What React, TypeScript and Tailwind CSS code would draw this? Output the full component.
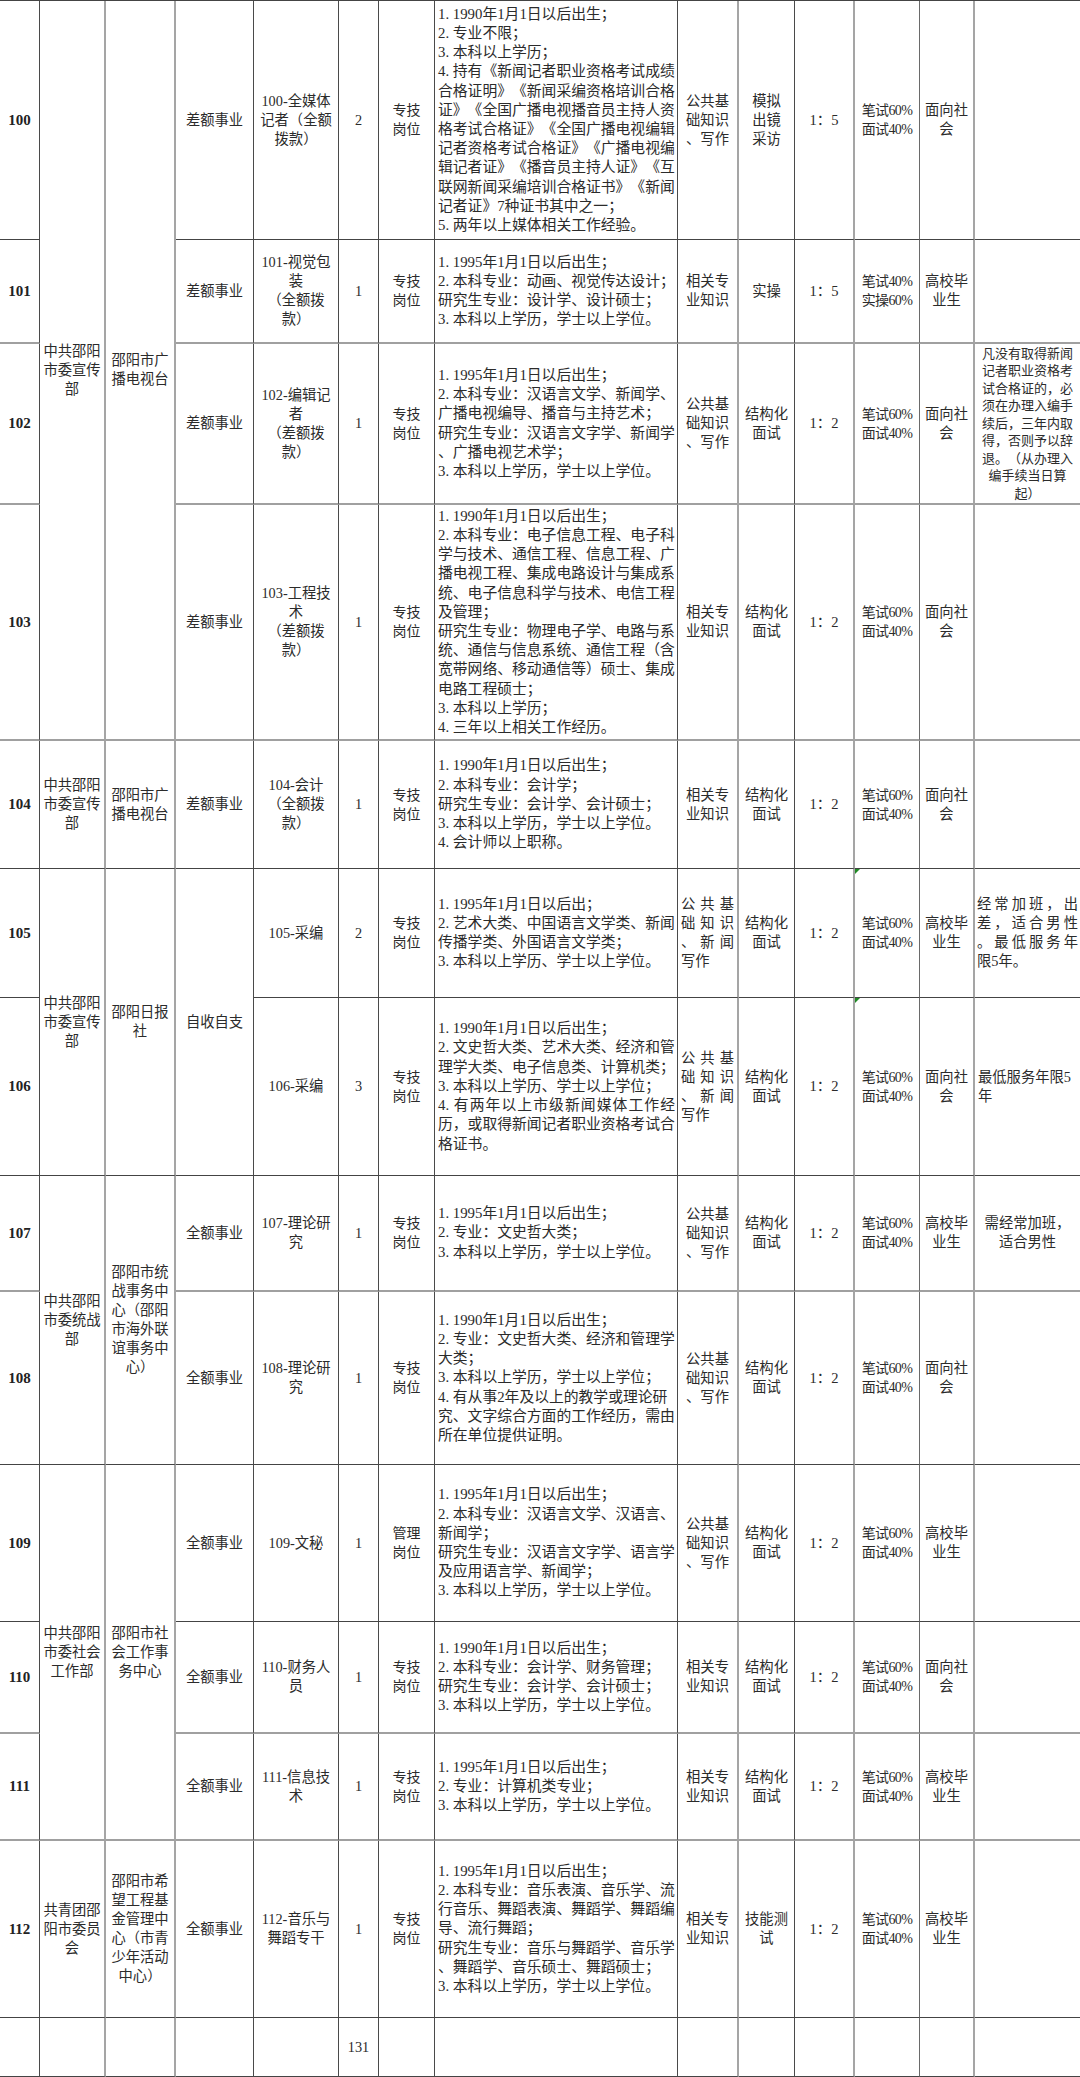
import React from "react";

type Line = string;

const BB = [
  "border-b border-b-[#444]",
  "border-b-2 border-b-[#a0a0a0]",
  "border-b-2 border-b-[#a0a0a0]",
  "border-b-2 border-b-[#a0a0a0]",
  "border-b border-b-[#444]",
  "border-b border-b-[#444]",
  "border-b border-b-[#444]",
  "border-b-2 border-b-[#a0a0a0]",
  "border-b border-b-[#444]",
  "border-b border-b-[#444]",
  "border-b-2 border-b-[#a0a0a0]",
  "border-b-2 border-b-[#a0a0a0]",
  "border-b border-b-[#444]",
  "border-b border-b-[#444]",
];

const BR = [
  "border-r border-r-[#4a4a4a]",
  "border-r-2 border-r-[#a5a5a5]",
  "border-r-2 border-r-[#a5a5a5]",
  "border-r border-r-[#4a4a4a]",
  "border-r border-r-[#4a4a4a]",
  "border-r border-r-[#4a4a4a]",
  "border-r border-r-[#4a4a4a]",
  "border-r border-r-[#4a4a4a]",
  "border-r-2 border-r-[#a5a5a5]",
  "border-r border-r-[#4a4a4a]",
  "border-r-2 border-r-[#a5a5a5]",
  "border-r border-r-[#6a6a6a]",
  "border-r-2 border-r-[#a5a5a5]",
  "",
];

const SPAN: Record<number, string> = {
  1: "",
  2: "row-span-2",
  3: "row-span-3",
  4: "row-span-4",
};

function Cell({
  col,
  end,
  span = 1,
  left = false,
  className = "",
  children,
}: {
  col: number;
  end: number;
  span?: number;
  left?: boolean;
  className?: string;
  children?: React.ReactNode;
}) {
  return (
    <div
      className={`${BR[col]} ${BB[end]} ${SPAN[span]} relative flex flex-col justify-center ${
        left ? "items-stretch text-left" : "items-center text-center"
      } ${className}`}
    >
      {children}
    </div>
  );
}

function Lines({ lines, className = "" }: { lines: Line[]; className?: string }) {
  return (
    <>
      {lines.map((l, i) => (
        <div key={i} className={`whitespace-nowrap ${className}`}>
          {l}
        </div>
      ))}
    </>
  );
}

function JLines({ lines, last }: { lines: Line[]; last?: Line }) {
  return (
    <>
      {lines.map((l, i) => (
        <div key={i} className="text-justify [text-align-last:justify]">
          {l}
        </div>
      ))}
      {last ? <div className="whitespace-nowrap text-left">{last}</div> : null}
    </>
  );
}

function Numbered({ text }: { text: string }) {
  const m = /^(\d)\.(.*)$/.exec(text);
  if (!m) return <>{text}</>;
  return (
    <>
      {m[1]}
      <span className="inline-block w-[0.5em]">.</span>
      {m[2]}
    </>
  );
}

type Group = { lines: Line[]; span: number };

type Row = {
  no: string;
  dept?: Group;
  unit?: Group;
  fund?: Group;
  post: Line[];
  num: string;
  kind: Line[];
  cond: Line[];
  condJ?: number;
  exam: Line[];
  examJ?: boolean;
  iv: Line[];
  ratio: string;
  score: Line[];
  green?: boolean;
  target: Line[];
  note?: "n102" | "n105" | "n106" | "n107";
};

const PUB = ["公共基", "础知识", "、写作"];
const REL = ["相关专", "业知识"];
const JG = ["结构化", "面试"];
const S64 = ["笔试60%", "面试40%"];
const SOC = ["面向社", "会"];
const GRAD = ["高校毕", "业生"];
const ZJ = ["专技", "岗位"];

const rows: Row[] = [
  {
    no: "100",
    dept: { lines: ["中共邵阳", "市委宣传", "部"], span: 4 },
    unit: { lines: ["邵阳市广", "播电视台"], span: 4 },
    fund: { lines: ["差额事业"], span: 1 },
    post: ["100-全媒体", "记者（全额", "拨款）"],
    num: "2",
    kind: ZJ,
    cond: [
      "1.1990年1月1日以后出生；",
      "2.专业不限；",
      "3.本科以上学历；",
      "4.持有《新闻记者职业资格考试成绩",
      "合格证明》《新闻采编资格培训合格",
      "证》《全国广播电视播音员主持人资",
      "格考试合格证》《全国广播电视编辑",
      "记者资格考试合格证》《广播电视编",
      "辑记者证》《播音员主持人证》《互",
      "联网新闻采编培训合格证书》《新闻",
      "记者证》7种证书其中之一；",
      "5.两年以上媒体相关工作经验。",
    ],
    exam: PUB,
    iv: ["模拟", "出镜", "采访"],
    ratio: "1：5",
    score: S64,
    target: SOC,
  },
  {
    no: "101",
    fund: { lines: ["差额事业"], span: 1 },
    post: ["101-视觉包", "装", "（全额拨", "款）"],
    num: "1",
    kind: ZJ,
    cond: [
      "1.1995年1月1日以后出生；",
      "2.本科专业：动画、视觉传达设计；",
      "研究生专业：设计学、设计硕士；",
      "3.本科以上学历，学士以上学位。",
    ],
    exam: REL,
    iv: ["实操"],
    ratio: "1：5",
    score: ["笔试40%", "实操60%"],
    target: GRAD,
  },
  {
    no: "102",
    fund: { lines: ["差额事业"], span: 1 },
    post: ["102-编辑记", "者", "（差额拨", "款）"],
    num: "1",
    kind: ZJ,
    cond: [
      "1.1995年1月1日以后出生；",
      "2.本科专业：汉语言文学、新闻学、",
      "广播电视编导、播音与主持艺术；",
      "研究生专业：汉语言文字学、新闻学",
      "、广播电视艺术学；",
      "3.本科以上学历，学士以上学位。",
    ],
    exam: PUB,
    iv: JG,
    ratio: "1：2",
    score: S64,
    target: SOC,
    note: "n102",
  },
  {
    no: "103",
    fund: { lines: ["差额事业"], span: 1 },
    post: ["103-工程技", "术", "（差额拨", "款）"],
    num: "1",
    kind: ZJ,
    cond: [
      "1.1990年1月1日以后出生；",
      "2.本科专业：电子信息工程、电子科",
      "学与技术、通信工程、信息工程、广",
      "播电视工程、集成电路设计与集成系",
      "统、电子信息科学与技术、电信工程",
      "及管理；",
      "研究生专业：物理电子学、电路与系",
      "统、通信与信息系统、通信工程（含",
      "宽带网络、移动通信等）硕士、集成",
      "电路工程硕士；",
      "3.本科以上学历；",
      "4.三年以上相关工作经历。",
    ],
    exam: REL,
    iv: JG,
    ratio: "1：2",
    score: S64,
    target: SOC,
  },
  {
    no: "104",
    dept: { lines: ["中共邵阳", "市委宣传", "部"], span: 1 },
    unit: { lines: ["邵阳市广", "播电视台"], span: 1 },
    fund: { lines: ["差额事业"], span: 1 },
    post: ["104-会计", "（全额拨", "款）"],
    num: "1",
    kind: ZJ,
    cond: [
      "1.1990年1月1日以后出生；",
      "2.本科专业：会计学；",
      "研究生专业：会计学、会计硕士；",
      "3.本科以上学历，学士以上学位。",
      "4.会计师以上职称。",
    ],
    exam: REL,
    iv: JG,
    ratio: "1：2",
    score: S64,
    target: SOC,
  },
  {
    no: "105",
    dept: { lines: ["中共邵阳", "市委宣传", "部"], span: 2 },
    unit: { lines: ["邵阳日报", "社"], span: 2 },
    fund: { lines: ["自收自支"], span: 2 },
    post: ["105-采编"],
    num: "2",
    kind: ZJ,
    cond: [
      "1.1995年1月1日以后出；",
      "2.艺术大类、中国语言文学类、新闻",
      "传播学类、外国语言文学类；",
      "3.本科以上学历、学士以上学位。",
    ],
    exam: ["公共基", "础知识", "、新闻", "写作"],
    examJ: true,
    iv: JG,
    ratio: "1：2",
    score: S64,
    green: true,
    target: GRAD,
    note: "n105",
  },
  {
    no: "106",
    post: ["106-采编"],
    num: "3",
    kind: ZJ,
    cond: [
      "1.1990年1月1日以后出生；",
      "2.文史哲大类、艺术大类、经济和管",
      "理学大类、电子信息类、计算机类；",
      "3.本科以上学历、学士以上学位；",
      "4.有两年以上市级新闻媒体工作经",
      "历，或取得新闻记者职业资格考试合",
      "格证书。",
    ],
    condJ: 4,
    exam: ["公共基", "础知识", "、新闻", "写作"],
    examJ: true,
    iv: JG,
    ratio: "1：2",
    score: S64,
    green: true,
    target: SOC,
    note: "n106",
  },
  {
    no: "107",
    dept: { lines: ["中共邵阳", "市委统战", "部"], span: 2 },
    unit: {
      lines: ["邵阳市统", "战事务中", "心（邵阳", "市海外联", "谊事务中", "心）"],
      span: 2,
    },
    fund: { lines: ["全额事业"], span: 1 },
    post: ["107-理论研", "究"],
    num: "1",
    kind: ZJ,
    cond: [
      "1.1995年1月1日以后出生；",
      "2.专业：文史哲大类；",
      "3.本科以上学历，学士以上学位。",
    ],
    exam: PUB,
    iv: JG,
    ratio: "1：2",
    score: S64,
    target: GRAD,
    note: "n107",
  },
  {
    no: "108",
    fund: { lines: ["全额事业"], span: 1 },
    post: ["108-理论研", "究"],
    num: "1",
    kind: ZJ,
    cond: [
      "1.1990年1月1日以后出生；",
      "2.专业：文史哲大类、经济和管理学",
      "大类；",
      "3.本科以上学历，学士以上学位；",
      "4.有从事2年及以上的教学或理论研",
      "究、文字综合方面的工作经历，需由",
      "所在单位提供证明。",
    ],
    exam: PUB,
    iv: JG,
    ratio: "1：2",
    score: S64,
    target: SOC,
  },
  {
    no: "109",
    dept: { lines: ["中共邵阳", "市委社会", "工作部"], span: 3 },
    unit: { lines: ["邵阳市社", "会工作事", "务中心"], span: 3 },
    fund: { lines: ["全额事业"], span: 1 },
    post: ["109-文秘"],
    num: "1",
    kind: ["管理", "岗位"],
    cond: [
      "1.1995年1月1日以后出生；",
      "2.本科专业：汉语言文学、汉语言、",
      "新闻学；",
      "研究生专业：汉语言文字学、语言学",
      "及应用语言学、新闻学；",
      "3.本科以上学历，学士以上学位。",
    ],
    exam: PUB,
    iv: JG,
    ratio: "1：2",
    score: S64,
    target: GRAD,
  },
  {
    no: "110",
    fund: { lines: ["全额事业"], span: 1 },
    post: ["110-财务人", "员"],
    num: "1",
    kind: ZJ,
    cond: [
      "1.1990年1月1日以后出生；",
      "2.本科专业：会计学、财务管理；",
      "研究生专业：会计学、会计硕士；",
      "3.本科以上学历，学士以上学位。",
    ],
    exam: REL,
    iv: JG,
    ratio: "1：2",
    score: S64,
    target: SOC,
  },
  {
    no: "111",
    fund: { lines: ["全额事业"], span: 1 },
    post: ["111-信息技", "术"],
    num: "1",
    kind: ZJ,
    cond: [
      "1.1995年1月1日以后出生；",
      "2.专业：计算机类专业；",
      "3.本科以上学历，学士以上学位。",
    ],
    exam: REL,
    iv: JG,
    ratio: "1：2",
    score: S64,
    target: GRAD,
  },
  {
    no: "112",
    dept: { lines: ["共青团邵", "阳市委员", "会"], span: 1 },
    unit: {
      lines: ["邵阳市希", "望工程基", "金管理中", "心（市青", "少年活动", "中心）"],
      span: 1,
    },
    fund: { lines: ["全额事业"], span: 1 },
    post: ["112-音乐与", "舞蹈专干"],
    num: "1",
    kind: ZJ,
    cond: [
      "1.1995年1月1日以后出生；",
      "2.本科专业：音乐表演、音乐学、流",
      "行音乐、舞蹈表演、舞蹈学、舞蹈编",
      "导、流行舞蹈；",
      "研究生专业：音乐与舞蹈学、音乐学",
      "、舞蹈学、音乐硕士、舞蹈硕士；",
      "3.本科以上学历，学士以上学位。",
    ],
    exam: REL,
    iv: ["技能测", "试"],
    ratio: "1：2",
    score: S64,
    target: GRAD,
  },
];

function Note({ kind }: { kind?: Row["note"] }) {
  if (kind === "n102") {
    return (
      <Lines
        className="text-[13px] leading-[17.5px]"
        lines={[
          "凡没有取得新闻",
          "记者职业资格考",
          "试合格证的，必",
          "须在办理入编手",
          "续后，三年内取",
          "得，否则予以辞",
          "退。（从办理入",
          "编手续当日算",
          "起）",
        ]}
      />
    );
  }
  if (kind === "n105") {
    return (
      <div className="px-[2px]">
        <JLines lines={["经常加班，出", "差，适合男性", "。最低服务年"]} last="限5年。" />
      </div>
    );
  }
  if (kind === "n106") {
    return (
      <div className="pl-[3px]">
        <Lines lines={["最低服务年限5", "年"]} />
      </div>
    );
  }
  if (kind === "n107") {
    return <Lines lines={["需经常加班，", "适合男性"]} />;
  }
  return null;
}

export default function App() {
  const cells: React.ReactNode[] = [];
  rows.forEach((r, i) => {
    cells.push(
      <Cell key={`${i}-0`} col={0} end={i}>
        <div className="text-[15px] font-bold text-[#222]">{r.no}</div>
      </Cell>
    );
    if (r.dept) {
      cells.push(
        <Cell key={`${i}-1`} col={1} end={i + r.dept.span - 1} span={r.dept.span}>
          <Lines lines={r.dept.lines} />
        </Cell>
      );
    }
    if (r.unit) {
      cells.push(
        <Cell key={`${i}-2`} col={2} end={i + r.unit.span - 1} span={r.unit.span}>
          <Lines lines={r.unit.lines} />
        </Cell>
      );
    }
    if (r.fund) {
      cells.push(
        <Cell key={`${i}-3`} col={3} end={i + r.fund.span - 1} span={r.fund.span}>
          <Lines lines={r.fund.lines} />
        </Cell>
      );
    }
    cells.push(
      <Cell key={`${i}-4`} col={4} end={i}>
        <Lines lines={r.post} />
      </Cell>
    );
    cells.push(
      <Cell key={`${i}-5`} col={5} end={i}>
        <div>{r.num}</div>
      </Cell>
    );
    cells.push(
      <Cell key={`${i}-6`} col={6} end={i} className="text-[14px]">
        <Lines lines={r.kind} />
      </Cell>
    );
    cells.push(
      <Cell key={`${i}-7`} col={7} end={i} left className="pl-[3px] text-[14.8px] leading-[19.2px]">
        {r.cond.map((l, k) =>
          r.condJ === k ? (
            <div key={k} className="pr-[2px] text-justify [text-align-last:justify]">
              <Numbered text={l} />
            </div>
          ) : (
            <div key={k} className="whitespace-nowrap">
              <Numbered text={l} />
            </div>
          )
        )}
      </Cell>
    );
    cells.push(
      <Cell key={`${i}-8`} col={8} end={i} left={r.examJ}>
        {r.examJ ? (
          <div className="px-[3px]">
            <JLines lines={r.exam.slice(0, 3)} last={r.exam[3]} />
          </div>
        ) : (
          <Lines lines={r.exam} />
        )}
      </Cell>
    );
    cells.push(
      <Cell key={`${i}-9`} col={9} end={i}>
        <Lines lines={r.iv} />
      </Cell>
    );
    cells.push(
      <Cell key={`${i}-10`} col={10} end={i}>
        <div className="text-[14.5px]">{r.ratio}</div>
      </Cell>
    );
    cells.push(
      <Cell key={`${i}-11`} col={11} end={i} className="text-[14px] tracking-[-0.6px]">
        {r.green ? (
          <div className="absolute left-0 top-0 h-0 w-0 border-t-[5px] border-r-[5px] border-t-[#1f8a24] border-r-transparent" />
        ) : null}
        <Lines lines={r.score} />
      </Cell>
    );
    cells.push(
      <Cell key={`${i}-12`} col={12} end={i}>
        <Lines lines={r.target} />
      </Cell>
    );
    cells.push(
      <Cell
        key={`${i}-13`}
        col={13}
        end={i}
        left={r.note === "n105" || r.note === "n106"}
      >
        <Note kind={r.note} />
      </Cell>
    );
  });

  for (let c = 0; c < 14; c++) {
    cells.push(
      <Cell key={`t-${c}`} col={c} end={13}>
        {c === 5 ? <div>131</div> : null}
      </Cell>
    );
  }

  return (
    <div className="w-[1080px] bg-white">
      <div className="grid w-[1080px] grid-cols-[40px_66px_70px_78px_85px_40px_56px_243px_61px_56px_60px_65px_55px_105px] grid-rows-[239px_104px_161px_236px_128px_129px_178px_116px_173px_157px_112px_107px_177px_59px] border-t border-t-[#444] font-['Liberation_Serif','Noto_Sans_CJK_SC',serif] text-[14.3px] leading-[19px] text-[#2b2b2b] [text-spacing-trim:space-all]">
        {cells}
      </div>
    </div>
  );
}
